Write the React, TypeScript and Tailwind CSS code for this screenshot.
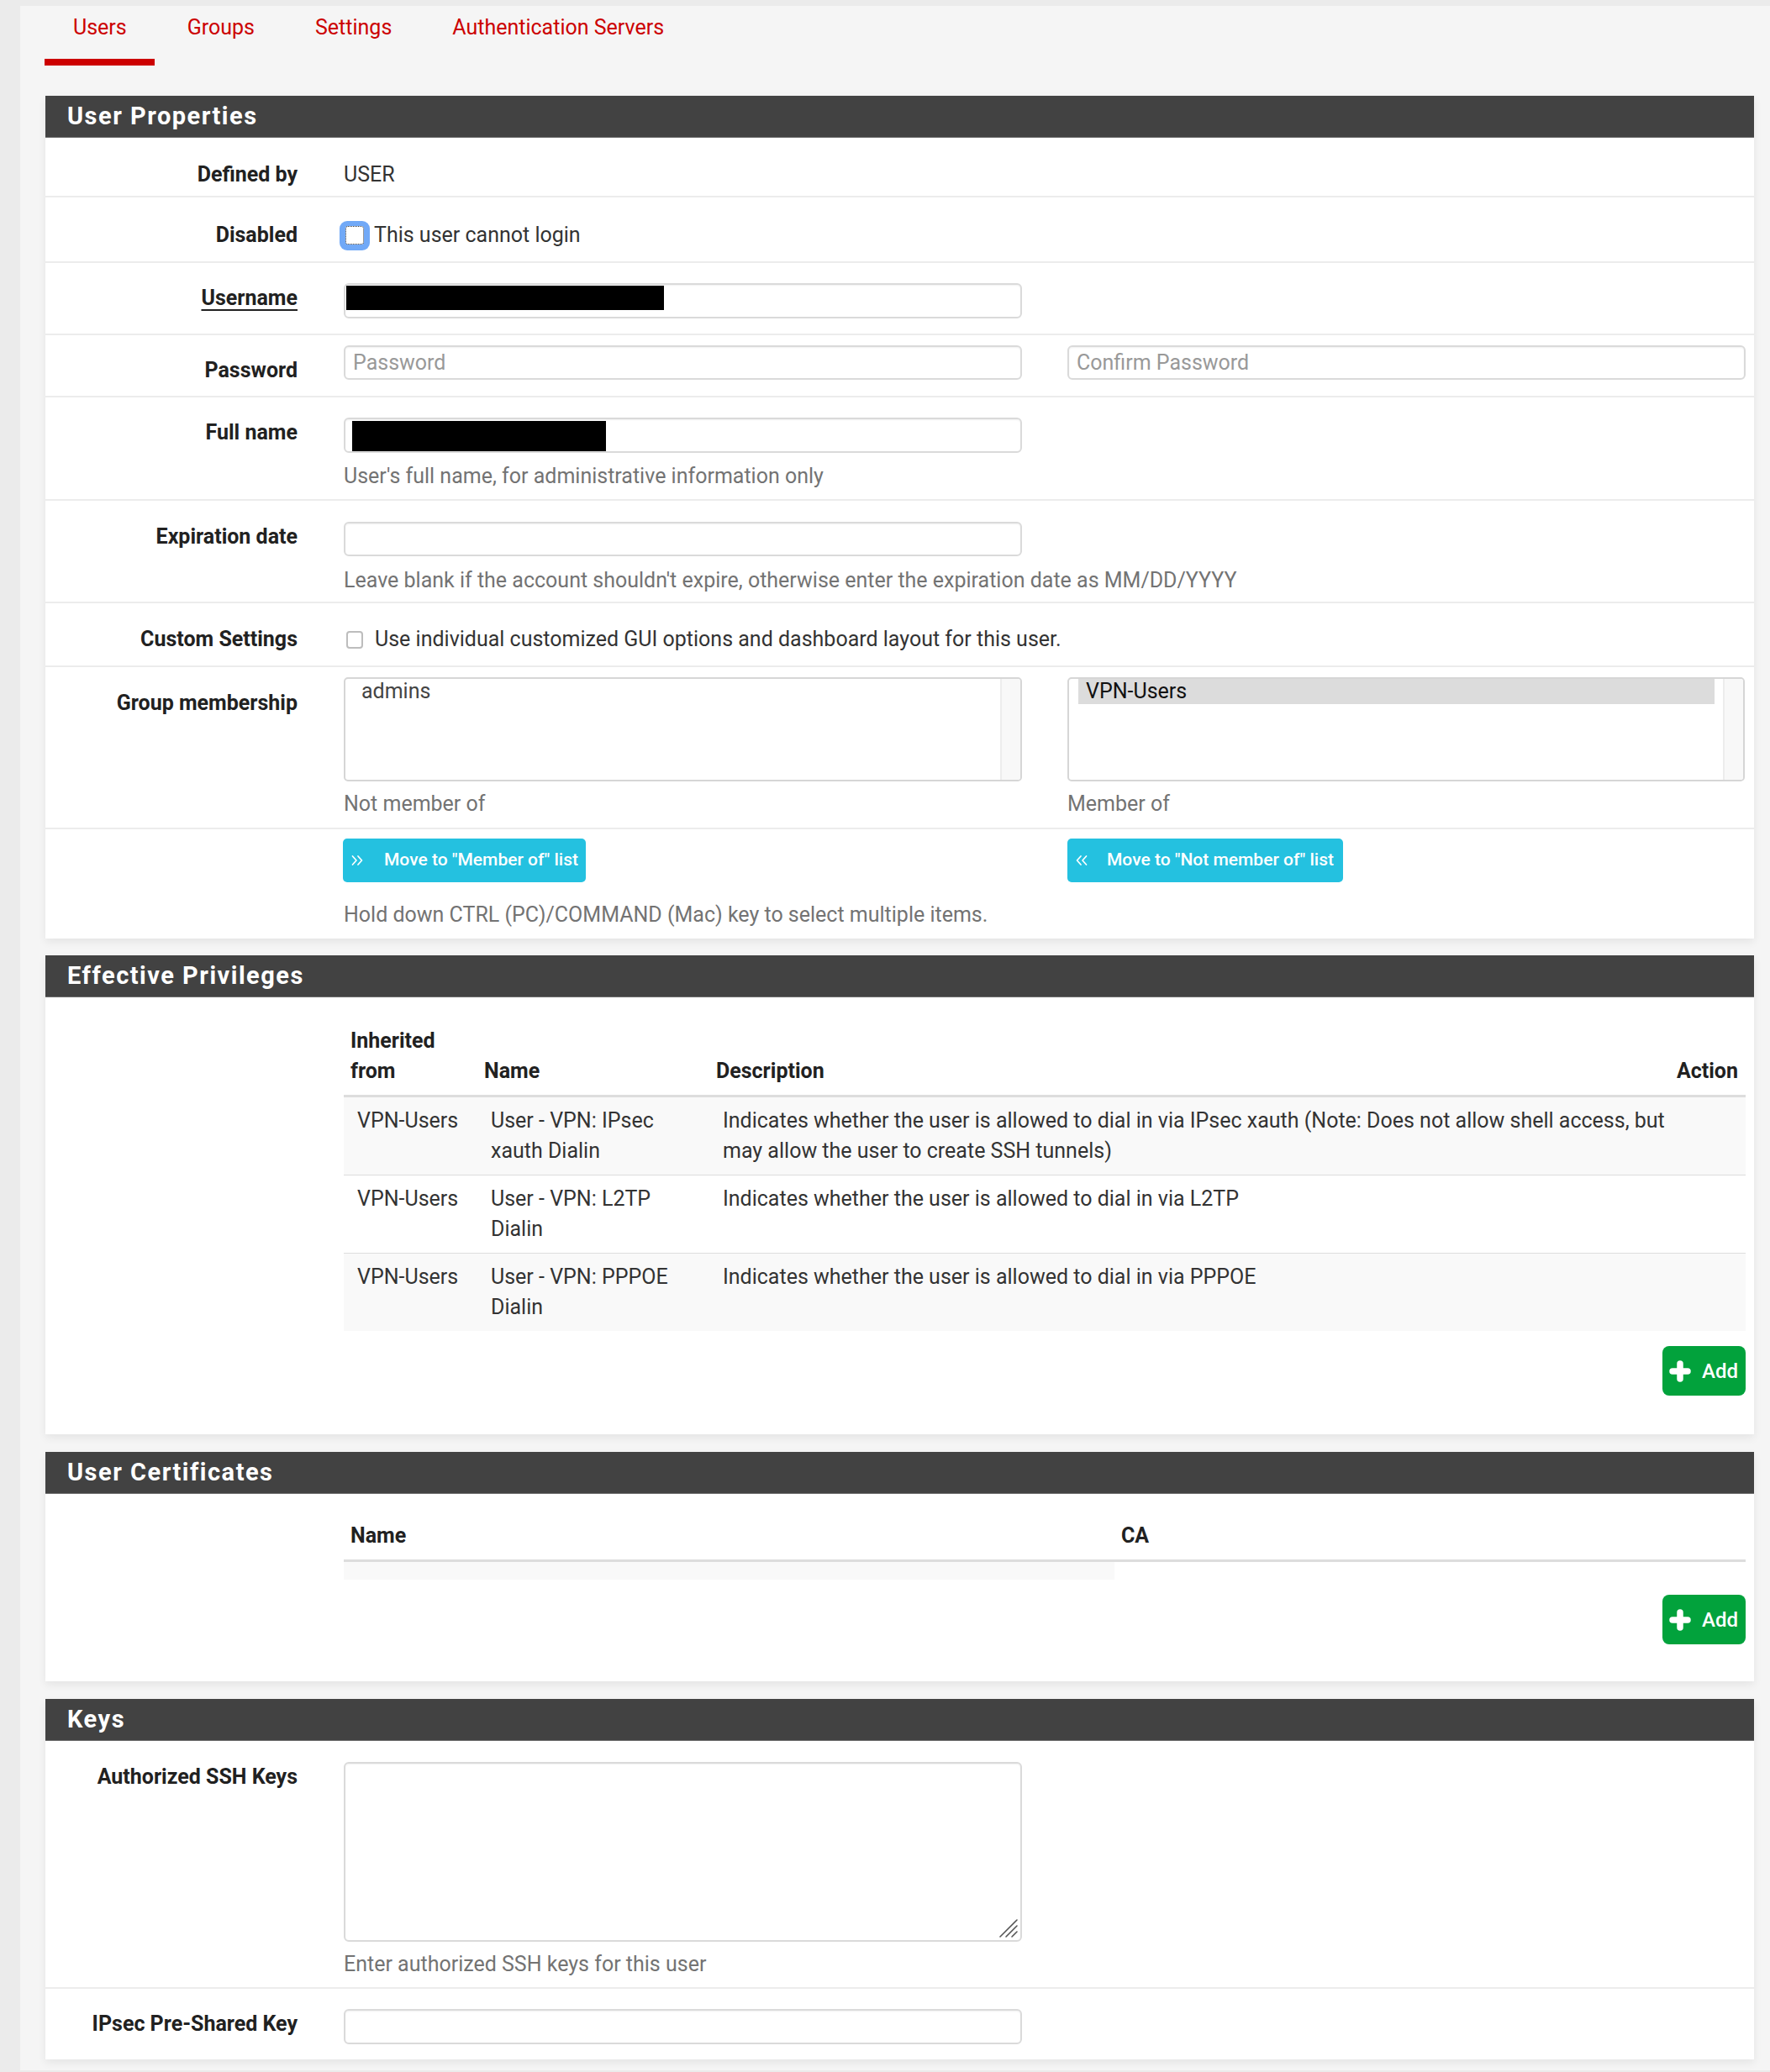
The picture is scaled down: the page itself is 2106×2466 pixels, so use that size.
import React from "react";

function ChevronsRight() {
  return (
    <svg width="16" height="16" viewBox="0 0 16 16" fill="none" stroke="white" strokeWidth="1.7" strokeLinecap="round" strokeLinejoin="round">
      <polyline points="2.5,3 7,8 2.5,13" />
      <polyline points="9,3 13.5,8 9,13" />
    </svg>
  );
}

function ChevronsLeft() {
  return (
    <svg width="16" height="16" viewBox="0 0 16 16" fill="none" stroke="white" strokeWidth="1.7" strokeLinecap="round" strokeLinejoin="round">
      <polyline points="7,3 2.5,8 7,13" />
      <polyline points="13.5,3 9,8 13.5,13" />
    </svg>
  );
}

function AddButton() {
  return (
    <div className="flex h-[59px] w-[99px] items-center gap-[13px] rounded-[8px] bg-[#02a23c] pl-[8px] text-[24px] font-medium text-white">
      <svg width="26" height="26" viewBox="0 0 26 26">
        <path d="M13 4v18M4 13h18" stroke="white" strokeWidth="7.5" strokeLinecap="round" />
      </svg>
      <span className="leading-none">Add</span>
    </div>
  );
}

function Panel({ title, children }: { title: string; children: React.ReactNode }) {
  return (
    <div className="bg-white shadow-[0_4px_10px_rgba(0,0,0,0.07)]">
      <div className="flex h-[50px] items-center border-b border-[#6e6e6e] bg-[#424242] pl-[26px]">
        <h2 className="text-[29px] font-bold tracking-[1.5px] text-white">{title}</h2>
      </div>
      {children}
    </div>
  );
}

function Tabs() {
  const tabs = ["Users", "Groups", "Settings", "Authentication Servers"];
  return (
    <div className="-ml-px flex gap-[5px]">
      {tabs.map((t, i) => (
        <div
          key={t}
          className={
            i === 0
              ? "h-[71px] border-b-[8px] border-[#cc0000] pl-[34px] pr-[33px] pt-[8px] text-[25px] leading-[36px] text-[#cc0000]"
              : "h-[71px] border-b-[8px] border-transparent pl-[34px] pr-[33px] pt-[8px] text-[25px] leading-[36px] text-[#cc0000]"
          }
        >
          {t}
        </div>
      ))}
    </div>
  );
}

function Input({ h, children }: { h: string; children?: React.ReactNode }) {
  return (
    <div
      className={
        h === "41"
          ? "h-[41px] w-[807px] rounded-[6px] border-2 border-[#dadada] bg-white shadow-[inset_0_1px_2px_rgba(0,0,0,0.06)]"
          : "h-[42px] w-[807px] rounded-[6px] border-2 border-[#dadada] bg-white shadow-[inset_0_1px_2px_rgba(0,0,0,0.06)]"
      }
    >
      {children}
    </div>
  );
}

function Help({ children, mt }: { children: React.ReactNode; mt: string }) {
  return (
    <div
      className={
        mt === "9"
          ? "mt-[9px] leading-[36px] text-[#737373]"
          : mt === "10"
          ? "mt-[10px] leading-[36px] text-[#737373]"
          : mt === "11"
          ? "mt-[11px] leading-[36px] text-[#737373]"
          : "mt-[21px] leading-[36px] text-[#737373]"
      }
    >
      {children}
    </div>
  );
}

function UserProperties() {
  return (
    <Panel title="User Properties">
      {/* Defined by */}
      <div className="flex border-b-2 border-[#ececec] pb-[7px] pt-[26px]">
        <div className="w-[300px] shrink-0 text-right font-bold leading-[36px]">Defined by</div>
        <div className="ml-[55px] w-[1667px] leading-[36px] text-[#333]">USER</div>
      </div>
      {/* Disabled */}
      <div className="flex border-b-2 border-[#ececec] pb-[13px] pt-[27px]">
        <div className="w-[300px] shrink-0 text-right font-bold leading-[36px]">Disabled</div>
        <div className="ml-[50px] flex h-[36px] w-[1672px] items-center">
          <div className="flex h-[35px] w-[36px] items-center justify-center rounded-[9px] bg-[#71a9f7]">
            <div className="h-[22px] w-[22px] rounded-[3px] border border-dotted border-[#333] bg-white" />
          </div>
          <span className="ml-[5px] leading-[36px] text-[#333]">This user cannot login</span>
        </div>
      </div>
      {/* Username */}
      <div className="flex border-b-2 border-[#ececec] pb-[18px] pt-[24px]">
        <div className="w-[300px] shrink-0 text-right font-bold leading-[36px]">
          <span className="underline decoration-2 underline-offset-[5px]">Username</span>
        </div>
        <div className="ml-[55px] w-[1667px]">
          <Input h="42">
            <div className="ml-[1px] mt-[1px] h-[29px] w-[378px] bg-black" />
          </Input>
        </div>
      </div>
      {/* Password */}
      <div className="flex border-b-2 border-[#ececec] pb-[12px] pt-[12px]">
        <div className="mt-[12px] w-[300px] shrink-0 text-right font-bold leading-[36px]">Password</div>
        <div className="ml-[55px] grid w-[1667px] grid-cols-[807px_806px] gap-x-[54px]">
          <Input h="41">
            <div className="pl-[9px] leading-[37px] text-[#999]">Password</div>
          </Input>
          <Input h="41">
            <div className="pl-[9px] leading-[37px] text-[#999]">Confirm Password</div>
          </Input>
        </div>
      </div>
      {/* Full name */}
      <div className="flex border-b-2 border-[#ececec] pb-[9px] pt-[24px]">
        <div className="w-[300px] shrink-0 text-right font-bold leading-[36px]">Full name</div>
        <div className="ml-[55px] w-[1667px]">
          <Input h="42">
            <div className="ml-[8px] mt-[2px] h-[36px] w-[302px] bg-black" />
          </Input>
          <Help mt="10">User's full name, for administrative information only</Help>
        </div>
      </div>
      {/* Expiration date */}
      <div className="flex border-b-2 border-[#ececec] pb-[7px] pt-[25px]">
        <div className="w-[300px] shrink-0 text-right font-bold leading-[36px]">Expiration date</div>
        <div className="ml-[55px] w-[1667px]">
          <Input h="41" />
          <Help mt="11">Leave blank if the account shouldn't expire, otherwise enter the expiration date as MM/DD/YYYY</Help>
        </div>
      </div>
      {/* Custom Settings */}
      <div className="flex border-b-2 border-[#ececec] pb-[13px] pt-[25px]">
        <div className="w-[300px] shrink-0 text-right font-bold leading-[36px]">Custom Settings</div>
        <div className="ml-[58px] flex h-[36px] w-[1664px] items-center">
          <div className="h-[21px] w-[20px] rounded-[4px] border-2 border-[#bdbdbd] bg-white" />
          <span className="ml-[14px] leading-[36px] text-[#333]">
            Use individual customized GUI options and dashboard layout for this user.
          </span>
        </div>
      </div>
      {/* Group membership */}
      <div className="flex border-b-2 border-[#ececec] pb-[10px] pt-[12px]">
        <div className="mt-[13px] w-[300px] shrink-0 text-right font-bold leading-[36px]">Group membership</div>
        <div className="ml-[55px] grid w-[1667px] grid-cols-[807px_806px] gap-x-[54px]">
          <div>
            <div className="flex h-[124px] overflow-hidden rounded-[5px] border-2 border-[#d6d6d6] bg-white">
              <div className="flex-1 pl-[19px] leading-[30px] text-[#444]">admins</div>
              <div className="w-[24px] border-l-2 border-[#ededed] bg-[#f8f8f8]" />
            </div>
            <Help mt="9">Not member of</Help>
          </div>
          <div>
            <div className="flex h-[124px] overflow-hidden rounded-[5px] border-2 border-[#d6d6d6] bg-white">
              <div className="flex-1 pl-[11px] pr-[10px]">
                <div className="bg-[#dcdcdc] pl-[9px] leading-[30px] text-[#111]">VPN-Users</div>
              </div>
              <div className="w-[24px] border-l-2 border-[#ededed] bg-[#f8f8f8]" />
            </div>
            <Help mt="9">Member of</Help>
          </div>
        </div>
      </div>
      {/* Buttons */}
      <div className="flex pb-[10px] pt-[11px]">
        <div className="w-[300px] shrink-0" />
        <div className="ml-[54px] w-[1668px]">
          <div className="grid grid-cols-[808px_806px] gap-x-[54px]">
            <div>
              <div className="inline-flex h-[52px] items-center gap-[24px] rounded-[5px] bg-[#24c1e0] pl-[9px] pr-[9px] text-[21px] font-medium text-white">
                <ChevronsRight />
                <span>Move to "Member of" list</span>
              </div>
            </div>
            <div>
              <div className="inline-flex h-[52px] items-center gap-[22px] rounded-[5px] bg-[#24c1e0] pl-[9px] pr-[11px] text-[21px] font-medium text-white">
                <ChevronsLeft />
                <span>Move to "Not member of" list</span>
              </div>
            </div>
          </div>
          <div className="ml-[1px]">
            <Help mt="21">Hold down CTRL (PC)/COMMAND (Mac) key to select multiple items.</Help>
          </div>
        </div>
      </div>
    </Panel>
  );
}

function EffectivePrivileges() {
  const rows = [
    { from: "VPN-Users", name: ["User - VPN: IPsec", "xauth Dialin"], desc: ["Indicates whether the user is allowed to dial in via IPsec xauth (Note: Does not allow shell access, but", "may allow the user to create SSH tunnels)"], striped: true },
    { from: "VPN-Users", name: ["User - VPN: L2TP", "Dialin"], desc: ["Indicates whether the user is allowed to dial in via L2TP"], striped: false },
    { from: "VPN-Users", name: ["User - VPN: PPPOE", "Dialin"], desc: ["Indicates whether the user is allowed to dial in via PPPOE"], striped: true },
  ];
  return (
    <Panel title="Effective Privileges">
      <div className="pb-[46px] pl-[355px] pr-[10px] pt-[22px]">
        <table className="w-[1668px] table-fixed border-collapse text-[25px] text-[#333]">
          <colgroup>
            <col className="w-[159px]" />
            <col className="w-[276px]" />
            <col className="w-[1138px]" />
            <col className="w-[95px]" />
          </colgroup>
          <thead>
            <tr>
              <th className="border-b-[3px] border-[#dddddd] pb-[10px] pl-[8px] pt-[12px] text-left align-bottom font-bold leading-[36px] text-[#212121]">
                Inherited
                <br />
                from
              </th>
              <th className="border-b-[3px] border-[#dddddd] pb-[10px] pl-[8px] pt-[12px] text-left align-bottom font-bold leading-[36px] text-[#212121]">Name</th>
              <th className="border-b-[3px] border-[#dddddd] pb-[10px] pl-[8px] pt-[12px] text-left align-bottom font-bold leading-[36px] text-[#212121]">Description</th>
              <th className="border-b-[3px] border-[#dddddd] pb-[10px] pr-[9px] pt-[12px] text-right align-bottom font-bold leading-[36px] text-[#212121]">Action</th>
            </tr>
          </thead>
          <tbody>
            {rows.map((r, i) => (
              <tr key={i} className={r.striped ? "bg-[#f9f9f9]" : "bg-white"}>
                <td className="whitespace-nowrap border-t border-[#dddddd] pb-[10px] pl-[16px] pt-[10px] align-top leading-[36px]">{r.from}</td>
                <td className="whitespace-nowrap border-t border-[#dddddd] pb-[10px] pl-[16px] pt-[10px] align-top leading-[36px]">
                  {r.name[0]}
                  <br />
                  {r.name[1]}
                </td>
                <td className="whitespace-nowrap border-t border-[#dddddd] pb-[10px] pl-[16px] pt-[10px] align-top leading-[36px]">
                  {r.desc.map((d, j) => (
                    <div key={j}>{d}</div>
                  ))}
                </td>
                <td className="border-t border-[#dddddd] pb-[10px] pt-[10px] align-top leading-[36px]" />
              </tr>
            ))}
          </tbody>
        </table>
        <div className="mt-[18px] flex justify-end">
          <AddButton />
        </div>
      </div>
    </Panel>
  );
}

function UserCertificates() {
  return (
    <Panel title="User Certificates">
      <div className="pb-[44px] pl-[355px] pr-[10px] pt-[20px]">
        <div className="grid grid-cols-[917px_1fr] border-b-[3px] border-[#dddddd] text-[25px] font-bold leading-[36px] text-[#212121]">
          <div className="pb-[10px] pl-[8px] pt-[12px]">Name</div>
          <div className="pb-[10px] pl-[8px] pt-[12px]">CA</div>
        </div>
        <div className="h-[21px] w-[917px] bg-[#f9f9f9]" />
        <div className="mt-[18px] flex justify-end">
          <AddButton />
        </div>
      </div>
    </Panel>
  );
}

function Keys() {
  return (
    <Panel title="Keys">
      <div className="flex border-b-2 border-[#ececec] pb-[9px] pt-[25px]">
        <div className="w-[300px] shrink-0 text-right font-bold leading-[36px]">Authorized SSH Keys</div>
        <div className="ml-[55px] w-[1667px]">
          <div className="relative h-[214px] w-[807px] rounded-[6px] border-2 border-[#dadada] bg-white shadow-[inset_0_1px_2px_rgba(0,0,0,0.06)]">
            <svg className="absolute bottom-[2px] right-[2px]" width="24" height="24" viewBox="0 0 24 24" stroke="#555" strokeWidth="1.6" strokeLinecap="round">
              <line x1="22" y1="2" x2="2" y2="22" />
              <line x1="22" y1="9" x2="9" y2="22" />
              <line x1="22" y1="16" x2="16" y2="22" />
            </svg>
          </div>
          <Help mt="9">Enter authorized SSH keys for this user</Help>
        </div>
      </div>
      <div className="flex pb-[18px] pt-[24px]">
        <div className="w-[300px] shrink-0 text-right font-bold leading-[36px]">IPsec Pre-Shared Key</div>
        <div className="ml-[55px] w-[1667px]">
          <Input h="42" />
        </div>
      </div>
    </Panel>
  );
}

export default function App() {
  return (
    <div className="min-h-screen bg-[#ebebeb] pl-[24px] pt-[7px] font-['Roboto',sans-serif] text-[25px] text-[#212121]">
      <div className="bg-[#f5f5f5] pb-[13px] pl-[30px] pr-[19px]">
        <Tabs />
        <div className="mt-[36px]">
          <UserProperties />
        </div>
        <div className="mt-[20px]">
          <EffectivePrivileges />
        </div>
        <div className="mt-[21px]">
          <UserCertificates />
        </div>
        <div className="mt-[21px]">
          <Keys />
        </div>
      </div>
    </div>
  );
}
